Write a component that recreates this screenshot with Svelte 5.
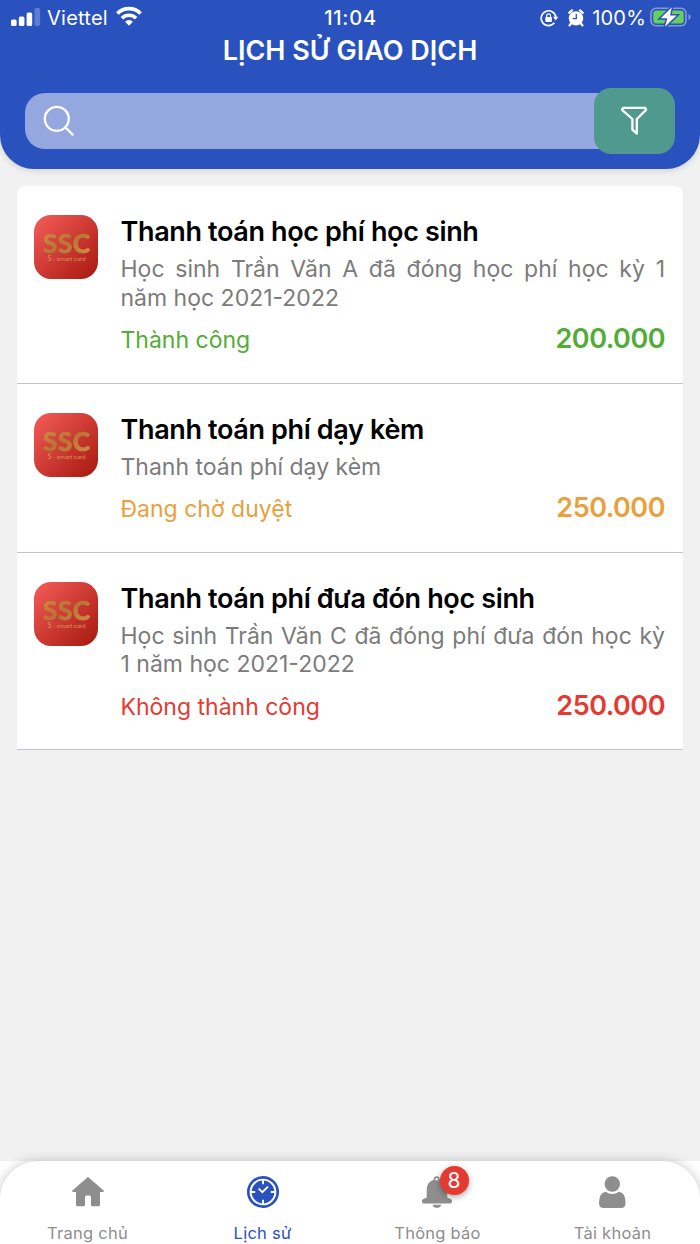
<script>
  const transactions = [
    {
      title: "Thanh toán học phí học sinh",
      text: "Học sinh Trần Văn A đã đóng học phí học kỳ 1 năm học 2021-2022",
      status: "Thành công",
      state: "success",
      amount: "200.000",
    },
    {
      title: "Thanh toán phí dạy kèm",
      text: "Thanh toán phí dạy kèm",
      status: "Đang chờ duyệt",
      state: "pending",
      amount: "250.000",
    },
    {
      title: "Thanh toán phí đưa đón học sinh",
      text: "Học sinh Trần Văn C đã đóng phí đưa đón học kỳ 1 năm học 2021-2022",
      status: "Không thành công",
      state: "failed",
      amount: "250.000",
    },
  ];

  const tabs = [
    { id: "home", label: "Trang chủ" },
    { id: "history", label: "Lịch sử" },
    { id: "bell", label: "Thông báo", badge: 8 },
    { id: "user", label: "Tài khoản" },
  ];

  let active = "history";
</script>

<div class="screen">
  <header>
    <div class="status-bar">
      <div class="side">
        <svg class="signal" width="30" height="20" viewBox="0 0 30 20" fill="#fff">
          <rect x="0" y="12.5" width="5.6" height="6.5" rx="1.6" />
          <rect x="7.8" y="9.5" width="5.6" height="9.5" rx="1.6" />
          <rect x="15.6" y="5.5" width="5.6" height="13.5" rx="1.6" />
          <rect x="23.5" y="1" width="5.6" height="18" rx="1.6" opacity=".25" />
        </svg>
        <span class="carrier">Viettel</span>
        <svg class="wifi" width="26" height="20" viewBox="0 0 26 20" fill="none" stroke="#fff" stroke-width="3.6">
          <path d="M1.4 7.4a16.4 16.4 0 0 1 23.2 0" />
          <path d="M5.9 12.2a10 10 0 0 1 14.2 0" />
          <path d="M13 19.8l-3.9-4.1a5.6 5.6 0 0 1 7.8 0z" fill="#fff" stroke="none" />
        </svg>
      </div>
      <span class="time">11:04</span>
      <div class="side right">
        <svg width="20" height="18" viewBox="0 0 20 18" fill="none" stroke="#fff" stroke-width="1.7">
          <path d="M14.4 13.8A7.4 7.4 0 1 1 15.9 8" />
          <path d="M13 7.8h5.4l-2.7 3.7z" fill="#fff" stroke="none" />
          <rect x="5.3" y="8" width="6.6" height="5" rx=".8" fill="#fff" stroke="none" />
          <path d="M6.7 8.5V6.8a1.9 1.9 0 0 1 3.8 0v1.7" stroke-width="1.2" />
        </svg>
        <svg class="alarm" width="16" height="18" viewBox="0 0 16 18">
          <circle cx="8" cy="9.4" r="7.2" fill="#fff" />
          <path d="M1.2 3.8L4 1.4M14.8 3.8L12 1.4M3 14.5l-1.4 1.9M13 14.5l1.4 1.9" stroke="#fff" stroke-width="2.2" stroke-linecap="round" />
          <path d="M8.3 5v4.6H4.7" stroke="#2952be" stroke-width="1.3" fill="none" />
        </svg>
        <span class="percent">100%</span>
        <svg class="battery" width="41" height="22" viewBox="0 0 41 22">
          <rect x="1" y="2.3" width="35" height="17.4" rx="5" fill="none" stroke="#839ada" stroke-width="1.6" />
          <path d="M38.5 8v6q2.2-1 2.2-3t-2.2-3z" fill="#839ada" />
          <rect x="3.3" y="4.6" width="30.4" height="12.8" rx="3" fill="#65cf5f" />
          <path d="M21.8 1.2L10.7 12.2h6.6L15 20.8 26.6 9.5H20z" fill="#fff" stroke="#2952be" stroke-width="3" paint-order="stroke" />
        </svg>
      </div>
    </div>
    <h1>LỊCH SỬ GIAO DỊCH</h1>
    <div class="search">
      <div class="field">
        <svg width="32" height="32" viewBox="0 0 32 32" fill="none" stroke="#fff" stroke-width="2.3" stroke-linecap="round">
          <circle cx="13.8" cy="13.8" r="12" />
          <path d="M22.3 22.3l7.3 7.3" />
        </svg>
      </div>
      <button class="filter" aria-label="Lọc">
        <svg width="28" height="30" viewBox="0 0 28 30" fill="none" stroke="#fff" stroke-width="2.3" stroke-linejoin="round">
          <path d="M2.2 1.900h21.800q1.600.9.600 2.500L15.800 13v14.600l-4.400-4V13L1.600 4.400Q.6 2.800 2.200 1.900z" />
        </svg>
      </button>
    </div>
  </header>

  <main>
    <svg class="defs" width="0" height="0">
      <defs>
        <linearGradient id="red" x1="0" y1="0" x2="1" y2="1">
          <stop offset="0" stop-color="#f65c59" />
          <stop offset="1" stop-color="#a5180e" />
        </linearGradient>
        <linearGradient id="gold" x1="0" y1="0" x2="1" y2="1">
          <stop offset="0" stop-color="#d48c42" />
          <stop offset=".5" stop-color="#bd7137" />
          <stop offset="1" stop-color="#d29045" />
        </linearGradient>
      </defs>
    </svg>
    {#each transactions as item}
      <article>
        <svg class="logo" width="64" height="64" viewBox="0 0 64 64">
          <rect width="64" height="64" rx="17" fill="url(#red)" />
          <text class="ssc" x="9" y="37.8" textLength="47" lengthAdjust="spacing" fill="url(#gold)" stroke="url(#gold)">SSC</text>
          <text class="sub" x="13.5" y="46" textLength="38" fill="#d69850"><tspan class="s">S</tspan> - smart card</text>
        </svg>
        <div class="info">
          <h2>{item.title}</h2>
          <p>{item.text}</p>
          <div class="result {item.state}">
            <span>{item.status}</span>
            <strong>{item.amount}</strong>
          </div>
        </div>
      </article>
    {/each}
  </main>

  <div class="nav-wrap">
    <nav>
      {#each tabs as tab}
        <button class="tab" class:active={tab.id === active} on:click={() => (active = tab.id)}>
          <span class="icon">
            <svg width="34" height="34" viewBox="0 0 34 34" fill="currentColor">
              {#if tab.id === "home"}
                <path d="M17 2L32.7 15.6q.7 1.4-.8 1.4H29v12.8q0 1.5-1.5 1.5h-6q-1.5 0-1.5-1.5V22q0-1.6-1.5-1.6h-3Q14 20.4 14 22v7.8q0 1.5-1.5 1.5h-6Q5 31.3 5 29.8V17H2.1Q.6 17 1.3 15.6z" />
              {:else if tab.id === "history"}
                <circle cx="17" cy="17" r="14.7" fill="none" stroke="currentColor" stroke-width="2.7" />
                <circle cx="17" cy="17" r="11.4" />
                <path d="M17 5v4.2M17 24.8V29M5 17h4.2M24.8 17H29" stroke="#fff" stroke-width="1.9" />
                <path d="M12.7 13.6l3.7 3.5 5.6-5.5" stroke="#fff" stroke-width="1.9" fill="none" />
              {:else if tab.id === "bell"}
                <path d="M15.7 1.300a3 3 0 0 1 3 3v.5q7.600 2.400 7.600 10.200v7.500l3.900 1.700q.8.500.8 2v.2q0 2-2 2H3q-2 0-2-2v-.2q0-1.500.8-2l3.900-1.700V15q0-7.800 7-10.200v-.5a3 3 0 0 1 3-3z" />
                <circle cx="15.7" cy="4.2" r="1.3" fill="#fff" />
                <path d="M11.6 29.7h8.600a4.400 4 0 0 1-8.600 0z" />
              {:else}
                <circle cx="16.300" cy="9" r="7.700" />
                <path d="M9.800 16.700q2.700 2.200 6.500 2.200t6.500-2.200Q29.600 17.500 29.600 28q0 5-4.600 5H7.600q-4.600 0-4.600-5 0-10.500 6.800-11.300z" />
              {/if}
            </svg>
            {#if tab.badge}<b class="badge">{tab.badge}</b>{/if}
          </span>
          <span class="label">{tab.label}</span>
        </button>
      {/each}
    </nav>
  </div>
</div>

<style>
  :global(body) {
    background: #f1f1f1;
  }
  .screen {
    width: 700px;
    height: 1244px;
    display: flex;
    flex-direction: column;
    background: #f1f1f1;
    font-family: Inter, "Liberation Sans", sans-serif;
    overflow: hidden;
  }
  svg {
    display: block;
    flex: none;
  }
  button {
    border: 0;
    padding: 0;
    font-family: inherit;
  }
  header {
    height: 169px;
    background: #2952be;
    color: #fff;
    border-radius: 0 0 34px 34px;
    box-shadow: 0 2px 6px rgba(0, 0, 0, 0.12);
  }
  .status-bar {
    height: 36px;
    box-sizing: border-box;
    padding: 0 9px 0 11px;
    display: grid;
    grid-template-columns: 1fr auto 1fr;
    align-items: center;
    font-size: 20px;
  }
  .side {
    display: flex;
    align-items: center;
  }
  .right {
    justify-content: flex-end;
  }
  .signal {
    margin-top: -3px;
  }
  .carrier {
    margin: 0 8px 0 6px;
    letter-spacing: 0.25px;
  }
  .wifi {
    margin-top: -4px;
  }
  .time {
    font-weight: 500;
    letter-spacing: 0.8px;
    margin-right: 1px;
  }
  .alarm {
    margin: 0 8px;
  }
  .percent {
    letter-spacing: 0.2px;
  }
  .battery {
    margin: -2px 0 0 4px;
  }
  h1 {
    margin: 0;
    height: 29px;
    line-height: 30px;
    text-align: center;
    font-size: 27px;
    font-weight: 600;
  }
  .search {
    display: flex;
    align-items: center;
    height: 66px;
    margin: 23px 25px 0;
  }
  .field {
    flex: 1;
    height: 56px;
    display: flex;
    align-items: center;
    padding-left: 18px;
    margin-right: -24px;
    border-radius: 20px;
    background: #94a8df;
  }
  .filter {
    width: 81px;
    height: 66px;
    display: flex;
    align-items: center;
    justify-content: center;
    border-radius: 17px;
    background: #50998e;
    position: relative;
  }
  main {
    flex: 1;
    margin: 17px 17px 0;
  }
  article {
    display: flex;
    gap: 22.5px;
    padding: 28px 18px 27.5px 17px;
    background: #fff;
    border-bottom: 1px solid #c2c5cf;
  }
  .defs + article {
    border-radius: 8px 8px 0 0;
  }
  .logo {
    margin-top: 1px;
  }
  .ssc {
    font: 700 26px Lato, sans-serif;
    stroke-width: 1.2px;
    stroke-linejoin: round;
    filter: drop-shadow(0.6px 0.8px 0.4px rgba(110, 30, 15, 0.6));
  }
  .sub {
    font: 6.4px Lato, sans-serif;
  }
  .s {
    font-size: 7.5px;
  }
  .info {
    flex: 1;
    min-width: 0;
  }
  h2 {
    margin: 0 0 5px;
    font-size: 27px;
    line-height: 36px;
    font-weight: 600;
    letter-spacing: -0.36px;
    color: #000;
  }
  p {
    margin: 0;
    font-size: 23px;
    line-height: 28.5px;
    color: #7b7b7b;
    text-align: justify;
  }
  .result {
    display: flex;
    justify-content: space-between;
    margin-top: 14px;
    line-height: 29px;
    font-size: 23px;
  }
  .result strong {
    font-size: 27px;
    font-weight: 600;
    line-height: 25px;
    letter-spacing: -0.5px;
  }
  .success {
    color: #51ad36;
  }
  .pending {
    color: #e9a03d;
  }
  .failed {
    color: #e43a31;
  }
  .nav-wrap {
    background: #fff;
  }
  nav {
    height: 83px;
    display: grid;
    grid-template-columns: repeat(4, 1fr);
    background: #fff;
    border-radius: 38px 38px 0 0;
    box-shadow: 0 0 12px rgba(0, 0, 0, 0.22);
  }
  .tab {
    display: flex;
    flex-direction: column;
    align-items: center;
    padding-top: 14px;
    background: none;
    color: #8e8e8e;
    font-size: 16.5px;
  }
  .active {
    color: #2952be;
  }
  .icon {
    position: relative;
  }
  .badge {
    position: absolute;
    left: 19px;
    top: -9px;
    width: 29px;
    height: 29px;
    border-radius: 50%;
    background: #e43a31;
    color: #fff;
    font-size: 21px;
    font-weight: 400;
    line-height: 29px;
    text-align: center;
    box-shadow: 0 2px 6px rgba(0, 0, 0, 0.35);
  }
  .label {
    margin-top: 14px;
    line-height: 20px;
    letter-spacing: 0.25px;
  }
</style>
